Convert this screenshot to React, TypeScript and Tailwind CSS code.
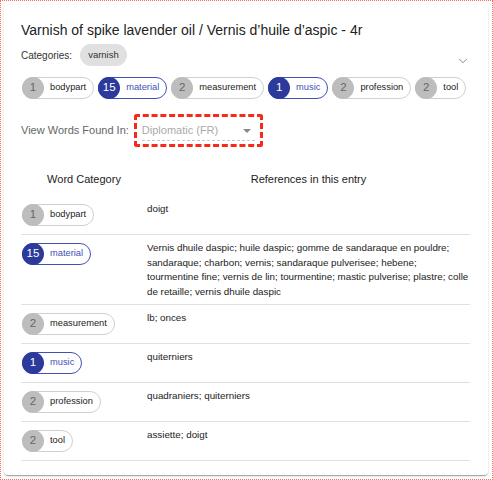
import { ChevronDown } from "lucide-react";
import clsx from "clsx";

const categories = [
  { count: 1, label: "bodypart", active: false, refs: "doigt" },
  {
    count: 15,
    label: "material",
    active: true,
    refs:
      "Vernis dhuile daspic; huile daspic; gomme de sandaraque en pouldre; sandaraque; charbon; vernis; sandaraque pulverisee; hebene; tourmentine fine; vernis de lin; tourmentine; mastic pulverise; plastre; colle de retaille; vernis dhuile daspic",
  },
  { count: 2, label: "measurement", active: false, refs: "lb; onces" },
  { count: 1, label: "music", active: true, refs: "quiterniers" },
  { count: 2, label: "profession", active: false, refs: "quadraniers; quiterniers" },
  { count: 2, label: "tool", active: false, refs: "assiette; doigt" },
];

const CountChip = ({ count, label, active }: { count: number; label: string; active?: boolean }) => {
  return (
    <div
      className={clsx(
        "inline-flex items-center h-[22px] rounded-full border bg-white pr-[7px]",
        active ? "border-[#3f51b5]" : "border-[#d0d0d0]"
      )}
    >
      <div
        className={clsx(
          "-ml-px w-[22px] h-[22px] rounded-full flex items-center justify-center text-[11.5px]",
          active ? "bg-[#2c3a9c] text-white" : "bg-[#bdbdbd] text-[#666]"
        )}
      >
        {count}
      </div>
      <span className={clsx("pl-[6px] text-[9.3px]", active ? "text-[#3f51b5]" : "text-[#222]")}>{label}</span>
    </div>
  );
};

export default function App() {
  return (
    <div className="w-[493px] h-[480px] border border-dotted border-[#ff6a50] bg-white pt-[4px] pl-[3px] font-['Liberation_Sans',Arial,sans-serif]">
      <div className="w-[484px] h-[470px] bg-white rounded-[4px] shadow-[0_2px_1px_-1px_rgba(0,0,0,0.2),0_1px_1px_0_rgba(0,0,0,0.14),0_1px_3px_0_rgba(0,0,0,0.12)] pl-[17px] pr-[16px] pt-[15px]">
        <h1 className="text-[14px] leading-[20px] text-[#222]">
          Varnish of spike lavender oil / Vernis d’huile d’aspic - 4r
        </h1>
        <div className="flex items-center mt-[2px]">
          <span className="text-[10px] text-[#333]">Categories:</span>
          <span className="ml-[8px] h-[22px] px-[8px] rounded-full bg-[#e0e0e0] text-[9.5px] text-[#333] flex items-center">
            varnish
          </span>
          <ChevronDown size={14} strokeWidth={1.5} className="ml-auto mt-[12px] mr-[2px] text-[#777]" />
        </div>
        <div className="flex items-center gap-[4px] mt-[9px] pl-px">
          {categories.map((c) => (
            <CountChip key={c.label} count={c.count} label={c.label} active={c.active} />
          ))}
        </div>
        <div className="flex items-center mt-[15px]">
          <span className="text-[11px] text-[#666]">View Words Found In:</span>
          <div className="ml-[5px] w-[129px] h-[33px] border-[3px] border-dashed border-[#f62a1a] rounded-[3px] px-[5px] pt-[4px]">
            <div className="flex items-center h-[20px] border-b border-dashed border-[#c8c8c8]">
              <span className="text-[11px] text-[#aaa]">Diplomatic (FR)</span>
              <svg width="8" height="4" viewBox="0 0 8 4" className="ml-auto mr-[4px]">
                <path d="M0 0h8L4 4z" fill="#888" />
              </svg>
            </div>
          </div>
        </div>
        <div className="w-[449px] mt-[25px]">
          <div className="flex text-[11px] text-[#222] leading-[14px] pb-[10px]">
            <div className="w-[126px] text-center">Word Category</div>
            <div className="flex-1 text-center">References in this entry</div>
          </div>
          {categories.map((c) => (
            <div key={c.label} className="flex border-b border-[#e0e0e0]">
              <div className="w-[126px] flex items-start pt-[8px] pb-[8px] pl-px">
                <CountChip count={c.count} label={c.label} active={c.active} />
              </div>
              <div className="w-[323px] pt-[6px] pb-[5px] text-[9.8px] leading-[14.5px] text-[#222]">{c.refs}</div>
            </div>
          ))}
        </div>
      </div>
    </div>
  );
}
